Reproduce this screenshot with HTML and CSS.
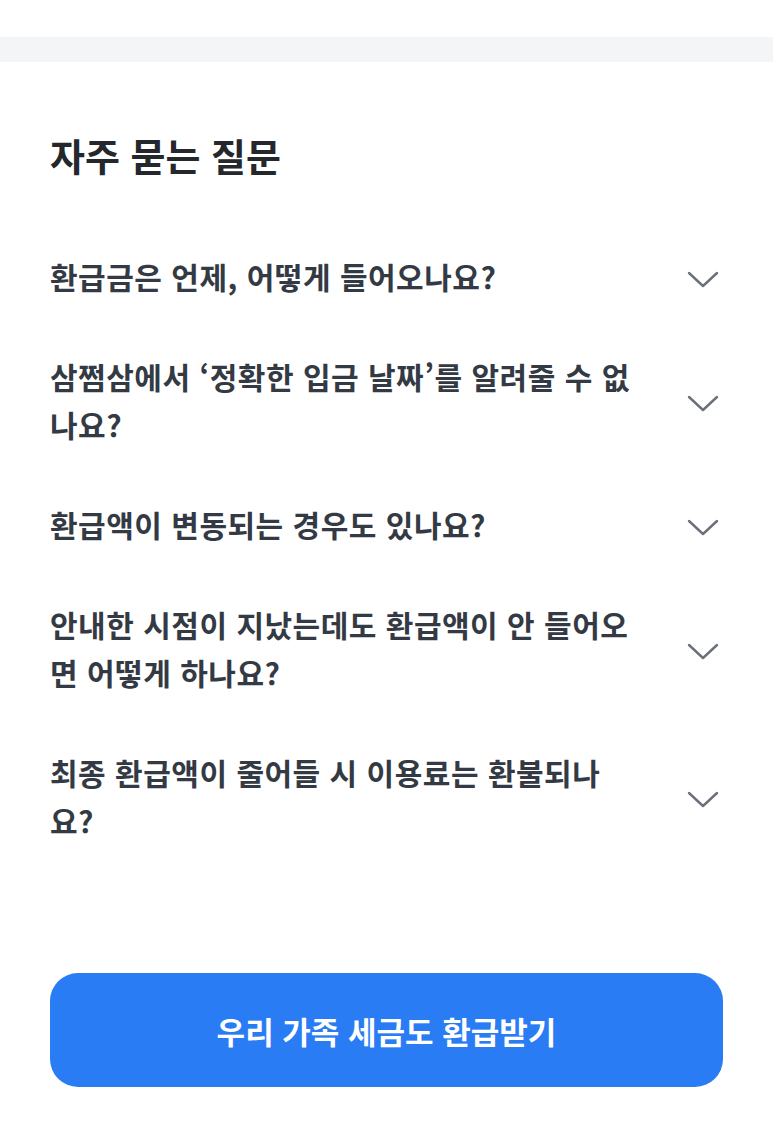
FILE: index.html
```html
<!DOCTYPE html>
<html lang="ko">
<head>
<meta charset="utf-8">
<title>자주 묻는 질문</title>
<link rel="stylesheet" href="styles.css">
</head>
<body>
<div class="top-space"></div>
<div class="divider"></div>
<section class="faq">
  <h2 class="faq-title">자주 묻는 질문</h2>
  <ul class="faq-list">
    <li class="faq-item">
      <span class="faq-q">환급금은 언제, 어떻게 들어오나요?</span>
      <svg class="chev" viewBox="0 0 32 18" width="32" height="18"><polyline points="2,2 16,15 30,2"/></svg>
    </li>
    <li class="faq-item">
      <span class="faq-q">삼쩜삼에서 ‘정확한 입금 날짜’를 알려줄 수 없나요?</span>
      <svg class="chev" viewBox="0 0 32 18" width="32" height="18"><polyline points="2,2 16,15 30,2"/></svg>
    </li>
    <li class="faq-item">
      <span class="faq-q">환급액이 변동되는 경우도 있나요?</span>
      <svg class="chev" viewBox="0 0 32 18" width="32" height="18"><polyline points="2,2 16,15 30,2"/></svg>
    </li>
    <li class="faq-item">
      <span class="faq-q">안내한 시점이 지났는데도 환급액이 안 들어오면 어떻게 하나요?</span>
      <svg class="chev" viewBox="0 0 32 18" width="32" height="18"><polyline points="2,2 16,15 30,2"/></svg>
    </li>
    <li class="faq-item">
      <span class="faq-q">최종 환급액이 줄어들 시 이용료는 환불되나요?</span>
      <svg class="chev" viewBox="0 0 32 18" width="32" height="18"><polyline points="2,2 16,15 30,2"/></svg>
    </li>
  </ul>
  <button class="cta" type="button">우리 가족 세금도 환급받기</button>
</section>
</body>
</html>
```
FILE: styles.css
```css
* { box-sizing: border-box; }
html, body { margin: 0; padding: 0; background: #ffffff; }
body {
  font-family: "Noto Sans CJK KR", "Noto Sans", sans-serif;
  width: 773px;
}
.top-space { height: 37px; background: #ffffff; }
.divider { height: 25px; background: #f3f5f7; }
.faq {
  padding: 68px 55px 42px 50px;
}
.faq-title {
  margin: 0;
  font-size: 38px;
  line-height: 50px;
  font-weight: 700;
  color: #24272c;
  letter-spacing: 0;
}
.faq-list {
  list-style: none;
  margin: 46px 0 0 0;
  padding: 0;
}
.faq-item {
  display: flex;
  align-items: center;
  justify-content: space-between;
  padding: 26px 0;
}
.faq-q {
  max-width: 592px;
  font-size: 30px;
  line-height: 48px;
  font-weight: 600;
  color: #333a44;
  letter-spacing: 0.5px;
}
.chev {
  flex: none;
  margin-top: 8px;
  margin-right: -1px;
}
.chev polyline {
  fill: none;
  stroke: #6b717b;
  stroke-width: 2.4;
  stroke-linecap: round;
  stroke-linejoin: round;
}
.cta {
  display: block;
  width: 673px;
  height: 114px;
  margin: 103px 0 0 0;
  border: 0;
  border-radius: 28px;
  background: #2a7cf4;
  color: #ffffff;
  font-family: "Noto Sans CJK KR", "Noto Sans", sans-serif;
  font-size: 31px;
  font-weight: 700;
  letter-spacing: 0;
}
```
